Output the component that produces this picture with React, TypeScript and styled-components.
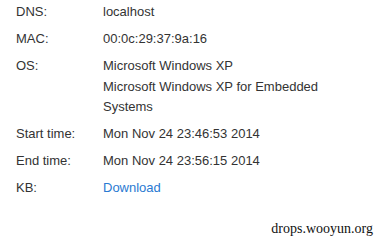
import styled, { createGlobalStyle } from 'styled-components';

const GlobalStyle = createGlobalStyle`
  html, body {
    margin: 0;
    padding: 0;
    background: #ffffff;
  }
`;

const rows: { label: string; lines: string[]; link?: boolean }[] = [
  { label: 'DNS:', lines: ['localhost'] },
  { label: 'MAC:', lines: ['00:0c:29:37:9a:16'] },
  { label: 'OS:', lines: ['Microsoft Windows XP', 'Microsoft Windows XP for Embedded Systems'] },
  { label: 'Start time:', lines: ['Mon Nov 24 23:46:53 2014'] },
  { label: 'End time:', lines: ['Mon Nov 24 23:56:15 2014'] },
  { label: 'KB:', lines: ['Download'], link: true },
];

const App = () => {
  return (
    <Page>
      <GlobalStyle />
      <InfoTable>
        {rows.map((row) => (
          <Row key={row.label}>
            <Label>{row.label}</Label>
            <Value>
              {row.lines.map((line) =>
                row.link ? (
                  <Link key={line} href="#">{line}</Link>
                ) : (
                  <Line key={line}>{line}</Line>
                )
              )}
            </Value>
          </Row>
        ))}
      </InfoTable>
      <Footer>
        <Watermark>drops.wooyun.org</Watermark>
      </Footer>
    </Page>
  );
};

const Page = styled.div`
  width: 377px;
  height: 242px;
  display: flex;
  flex-direction: column;
  font-family: 'Liberation Sans', Arial, sans-serif;
  font-size: 13px;
  color: #333333;
`;

const InfoTable = styled.div`
  display: flex;
  flex-direction: column;
  padding: 2px 0 0 16px;
`;

const Row = styled.div`
  display: grid;
  grid-template-columns: 87px 220px;
  padding: 0 0 6.5px;
  line-height: 20.5px;
`;

const Label = styled.div``;

const Value = styled.div`
  display: flex;
  flex-direction: column;
`;

const Line = styled.span``;

const Link = styled.a`
  color: #2a7ad2;
  text-decoration: none;
`;

const Footer = styled.div`
  flex: 1;
  display: flex;
  justify-content: flex-end;
  align-items: flex-end;
  padding: 0 4px 5px 0;
`;

const Watermark = styled.span`
  font-family: 'Liberation Serif', 'Times New Roman', serif;
  font-size: 14px;
  color: #111111;
`;

export default App;
